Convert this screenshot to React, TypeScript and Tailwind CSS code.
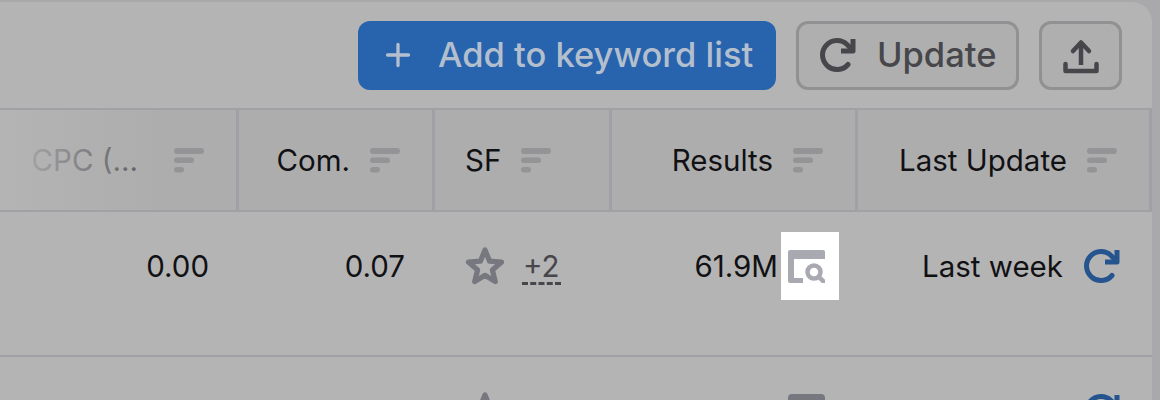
import { Plus } from "lucide-react";

// Column widths follow the header cells, left to right
const columns = [
  { label: "CPC (...", width: "w-[239px]", faded: true },
  { label: "Com.", width: "w-[196px]" },
  { label: "SF", width: "w-[177px]", left: true },
  { label: "Results", width: "w-[246px]" },
  { label: "Last Update", width: "flex-1" },
];

const SortIcon = () => (
  <svg width="30" height="25" viewBox="0 0 30 25" className="shrink-0 text-[#949497]">
    <rect x="0" y="0" width="30" height="6" rx="3" fill="currentColor" />
    <rect x="0" y="9.5" width="20" height="5.5" rx="2.75" fill="currentColor" />
    <rect x="0" y="19" width="10" height="5.5" rx="2.75" fill="currentColor" />
  </svg>
);

const RefreshIcon = ({ className }: { className: string }) => (
  <svg viewBox="0 0 36 36" fill="none" className={className}>
    <path
      d="M28 27.5A14.5 14.5 0 1 1 27 7.5L31 11.5"
      stroke="currentColor"
      strokeWidth="5"
      strokeLinecap="round"
    />
    <path d="M33 2V14H21" stroke="currentColor" strokeWidth="5" strokeLinejoin="round" />
  </svg>
);

const UploadIcon = () => (
  <svg width="36" height="36" viewBox="0 0 36 36" fill="none" stroke="currentColor" strokeWidth="4.5">
    <path d="M2.5 26V33H33.5V26" strokeLinecap="round" strokeLinejoin="round" />
    <path d="M18 27V4" />
    <path d="M10 13L18 4.5L26 13" strokeLinecap="round" strokeLinejoin="round" />
  </svg>
);

const StarIcon = () => (
  <svg width="40" height="40" viewBox="0 0 40 40" fill="none" className="text-[#77777f] mt-[2px]">
    <path
      d="M20 4L24.6 15.2L36.6 16.1L27.4 23.9L30.3 35.6L20 29.3L9.7 35.6L12.6 23.9L3.4 16.1L15.4 15.2Z"
      stroke="currentColor"
      strokeWidth="5.2"
      strokeLinejoin="round"
    />
  </svg>
);

const SerpIcon = () => (
  <svg width="37" height="33" viewBox="0 0 37 33" className="text-[#a9a9b2]">
    <path d="M0 2a2 2 0 0 1 2-2h33a2 2 0 0 1 2 2v7H0z" fill="currentColor" />
    <path d="M0 9h6v19h9v5H2a2 2 0 0 1-2-2z" fill="currentColor" />
    <circle cx="26" cy="22" r="6.5" fill="none" stroke="currentColor" strokeWidth="4.5" />
    <path d="M31 27l5 5" stroke="currentColor" strokeWidth="4.5" strokeLinecap="round" />
  </svg>
);

export default function App() {
  return (
    <div className="w-[1160px] h-[400px] overflow-hidden bg-[#a9a9ac] font-['Inter',sans-serif] text-[29.5px] text-[#111114]">
      <div className="h-[420px] w-[1152px] mt-[2px] rounded-tr-[20px] bg-[#b4b4b5]">
        {/* toolbar */}
        <div className="h-[106px] flex items-start justify-end gap-5 pt-[19px] pr-[30px]">
          <button className="h-[69px] w-[418px] flex items-center gap-[22px] pl-[22px] pb-[1px] rounded-xl bg-[#2864ae] text-[34.5px] text-[#b4bfce] font-medium">
            <Plus size={36} strokeWidth={2.2} />
            Add to keyword list
          </button>
          <button className="h-[69px] w-[223px] flex items-center gap-[21px] pl-[21px] pb-[1px] rounded-xl border-[3px] border-[#919194] bg-[#afafb0] text-[34.5px] text-[#47474b] font-medium">
            <RefreshIcon className="w-[36px] h-[36px]" />
            Update
          </button>
          <button className="h-[69px] w-[83px] flex items-center justify-center rounded-xl border-[3px] border-[#919194] bg-[#afafb0] text-[#47474b]">
            <UploadIcon />
          </button>
        </div>

        {/* header row */}
        <div className="relative h-[104px] flex bg-[#adadae] border-y-2 border-[#a0a0a5]">
          {columns.map((col) => (
            <div
              key={col.label}
              className={`${col.width} flex items-center border-r-[3px] border-[#a0a0a5] last:border-r-0 ${
                col.left ? "justify-start pl-[30px]" : "justify-end pr-[32px]"
              } ${col.faded ? "gap-9" : "gap-5"}`}
            >
              <span className={col.faded ? "text-[#56565a]" : ""}>{col.label}</span>
              <SortIcon />
            </div>
          ))}
          {/* fade over the scrolled-away columns */}
          <div className="absolute inset-y-0 left-0 w-[160px] bg-gradient-to-r from-[#b4b4b5] to-transparent" />
        </div>

        {/* data rows */}
        <div className="h-[145px] flex border-b-2 border-[#a0a0a8]">
          <div className="w-[209px] pt-[32px] text-right">0.00</div>
          <div className="w-[196px] pt-[32px] text-right">0.07</div>
          <div className="w-[222px] pl-[60px] flex items-start gap-[18px] pt-[32px]">
            <StarIcon />
            <span className="relative text-[#47474b]">
              +2
              <span className="absolute -left-[1px] -right-[1px] top-[38px] border-t-[3px] border-dashed border-[#47474b]" />
            </span>
          </div>
          <div className="w-[151px] pt-[32px] text-right">61.9M</div>
          <div className="ml-[3px] mt-[20px] h-[68px] w-[58px] flex items-center justify-start pl-[7px] bg-white self-start">
            <SerpIcon />
          </div>
          <div className="flex-1 flex items-start justify-end gap-[21px] pt-[32px] pr-[32px]">
            <span>Last week</span>
            <RefreshIcon className="w-[36px] h-[36px] mt-[4px] text-[#25548f]" />
          </div>
        </div>

        <div className="flex">
          <div className="w-[209px] pt-[32px] text-right">0.00</div>
          <div className="w-[196px] pt-[32px] text-right">0.00</div>
          <div className="w-[222px] pl-[60px] flex items-start gap-[18px] pt-[32px]">
            <StarIcon />
            <span className="text-[#47474b]">+2</span>
          </div>
          <div className="w-[151px] pt-[32px] text-right">35.4M</div>
          <div className="ml-[3px] mt-[37px] w-[58px] flex justify-start pl-[7px] self-start">
            <div className="h-[33px] w-[37px] rounded-sm bg-[#77777f]" />
          </div>
          <div className="flex-1 flex items-start justify-end gap-[21px] pt-[32px] pr-[32px]">
            <span>Last week</span>
            <RefreshIcon className="w-[36px] h-[36px] mt-[4px] text-[#25548f]" />
          </div>
        </div>
      </div>
    </div>
  );
}
